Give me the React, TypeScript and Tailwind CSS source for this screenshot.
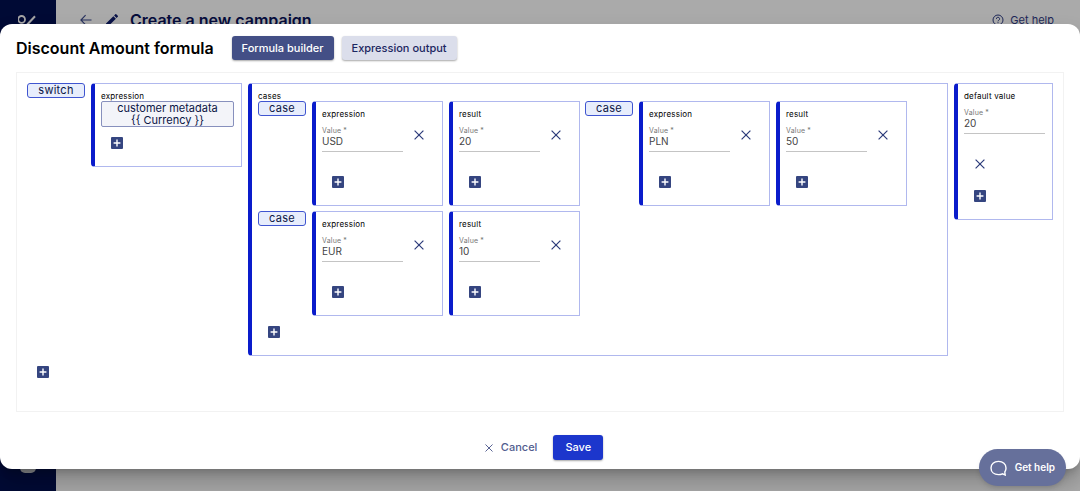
import React, { useId, useState } from "react";

type BoxProps = {
  label: string;
  className?: string;
  children: React.ReactNode;
};

const cases = [
  { expression: "USD", result: "20" },
  { expression: "PLN", result: "50" },
  { expression: "EUR", result: "10" },
];

const CloseIcon = ({ className }: { className: string }) => (
  <svg viewBox="0 0 10 10" className={className} aria-hidden="true">
    <path d="M0.6 0.6 9.4 9.4M9.4 0.6 0.6 9.4" stroke="currentColor" strokeWidth="1.2" />
  </svg>
);

const AddButton = () => (
  <button type="button" aria-label="Add" className="flex size-8 shrink-0 items-center justify-center">
    <svg viewBox="0 0 12 12" className="size-3" aria-hidden="true">
      <rect width="12" height="12" rx="1" fill="#354580" />
      <path d="M6 2.6v6.8M2.6 6h6.8" stroke="#fff" strokeWidth="1.4" />
    </svg>
  </button>
);

const Tag = ({ children, className = "" }: { children: React.ReactNode; className?: string }) => (
  <span
    className={`flex shrink-0 items-center justify-center rounded-[3px] border border-[#3f55d0] bg-[#e7edfc] text-[11px] leading-[13px] tracking-wide text-[#0b1545] ${className}`}
  >
    {children}
  </span>
);

// blue edged container for every argument of a function
const Box = ({ label, className = "", children }: BoxProps) => (
  <div
    className={`rounded-l border border-l-4 border-[#b0b8ee] border-l-[#0a1ccb] py-[7px] pr-[7px] pl-1.5 ${className}`}
  >
    <div className="text-[8px] leading-[10px] tracking-wide text-black">{label}</div>
    {children}
  </div>
);

const ValueField = ({ value, stacked = false }: { value: string; stacked?: boolean }) => {
  const id = useId();
  const [text, setText] = useState(value);

  return (
    <div className={stacked ? "flex flex-col" : "flex"}>
      <div className="w-[81px] pt-2 pb-3.5">
        <label htmlFor={id} className="block text-[7px] leading-[7px] tracking-wide text-[#777]">
          Value *
        </label>
        <input
          id={id}
          value={text}
          onChange={(e) => setText(e.target.value)}
          className="block h-[18px] w-full border-b border-[#c4c4c4] pb-1 text-[10px] leading-[14px] text-[#444] outline-none"
        />
      </div>
      <button
        type="button"
        aria-label="Remove value"
        className="flex size-8 shrink-0 items-center justify-center text-[#2c3b7a]"
      >
        <CloseIcon className="size-2.5" />
      </button>
    </div>
  );
};

const Backdrop = () => (
  <div className="flex min-h-screen bg-[#aaaaaa]">
    <div className="flex w-14 flex-col items-center justify-between bg-[#000a35] pt-3.5 pb-[18px]">
      <svg viewBox="0 0 20 14" className="h-3.5 w-5" fill="none" stroke="#a5a5a5" strokeWidth="1.8">
        <circle cx="3.6" cy="5.4" r="3.4" />
        <path d="M17 2.2 7.400 12.500" strokeWidth="2" />
      </svg>
      <div className="size-4 rounded-[5px] bg-[#8d8f91]" />
    </div>
    <div className="flex flex-1 items-start justify-between pt-[11px] pr-[26px] pl-6">
      <div className="flex items-center">
        <svg viewBox="0 0 12 12" className="size-3" fill="none" stroke="#27315e" strokeWidth="1.1">
          <path d="M11.5 6H1M5.6 1.2.9 6l4.7 4.8" />
        </svg>
        <svg viewBox="0 0 24 24" className="ml-3 size-4" fill="#0a1348">
          <path d="M3 17.25V21h3.75L17.81 9.94l-3.75-3.75zM20.71 7.04a1 1 0 0 0 0-1.41l-2.34-2.34a1 1 0 0 0-1.41 0l-1.83 1.83 3.75 3.75z" />
        </svg>
        <h2 className="ml-2.5 text-base leading-[18px] font-semibold text-[#060d3c]">
          Create a new campaign
        </h2>
      </div>
      <a href="#help" className="flex items-center gap-1.5 text-[11px] leading-[18px] text-[#1e2858]">
        <svg viewBox="0 0 12 12" className="size-3" fill="none" stroke="currentColor">
          <circle cx="6" cy="6" r="5" />
          <path d="M4.4 4.9a1.6 1.6 0 1 1 2.3 1.4c-.5.3-.7.5-.7 1M6 8.2v1" />
        </svg>
        Get help
      </a>
    </div>
  </div>
);

const App: React.FC = () => {
  return (
    <main className="relative min-h-screen overflow-hidden font-['Inter',sans-serif]">
      <Backdrop />

      <section
        role="dialog"
        aria-label="Discount Amount formula"
        className="absolute inset-x-0 top-6 rounded-xl bg-white px-4 pt-3 pb-[9px] shadow-[0_6px_8px_-3px_rgba(0,0,0,0.2),0_14px_22px_2px_rgba(0,0,0,0.2)]"
      >
        <div className="flex items-center gap-2">
          <h1 className="mr-2.5 text-base leading-6 font-semibold text-black">
            Discount Amount formula
          </h1>
          <button
            type="button"
            className="h-6 rounded-[3px] bg-[#434f86] px-2.5 text-[11px] font-medium text-white shadow-[0_1px_2px_rgba(0,0,0,0.35)]"
          >
            Formula builder
          </button>
          <button
            type="button"
            className="h-6 rounded-[3px] bg-[#dbdeeb] px-2.5 text-[11px] font-medium text-[#1c2761] shadow-[0_1px_2px_rgba(0,0,0,0.35)]"
          >
            Expression output
          </button>
        </div>

        {/* formula canvas */}
        <div className="mt-3 border border-[#f2f2f2] p-2.5 pb-[23px]">
          <div className="flex items-start gap-1.5">
            <Tag className="w-[58px]">switch</Tag>
            <Box label="expression" className="shrink-0">
              <div className="w-[133px] rounded-xs border border-[#8790bd] bg-[#f3f4f9] text-center text-[11px] leading-3 text-[#0b1545]">
                customer metadata
                <br />
                {"{{ Currency }}"}
              </div>
              <AddButton />
            </Box>
            <Box label="cases" className="min-w-0 flex-1">
              <div className="flex flex-wrap gap-[5px]">
                {cases.map((item) => (
                  <div key={item.expression} className="flex items-start gap-1.5">
                    <Tag className="w-12">case</Tag>
                    <Box label="expression">
                      <ValueField value={item.expression} />
                      <AddButton />
                    </Box>
                    <Box label="result">
                      <ValueField value={item.result} />
                      <AddButton />
                    </Box>
                  </div>
                ))}
              </div>
              <AddButton />
            </Box>
            <Box label="default value" className="shrink-0">
              <ValueField value="20" stacked />
              <AddButton />
            </Box>
          </div>
          <AddButton />
        </div>

        <div className="mt-[23px] flex items-center justify-center gap-4">
          <button
            type="button"
            className="flex h-[25px] items-center gap-2 pl-2 text-[11px] font-medium text-[#525d8f]"
          >
            <CloseIcon className="size-2" />
            Cancel
          </button>
          <button
            type="button"
            className="h-[25px] rounded-[3px] bg-[#1c36cc] px-3 text-[11px] font-medium text-white shadow-[0_1px_2px_rgba(0,0,0,0.35)]"
          >
            Save
          </button>
        </div>
      </section>

      {/* support chat */}
      <button
        type="button"
        className="absolute right-3.5 bottom-[5px] flex h-[37px] items-center gap-2 rounded-full bg-[#66709b] px-[11px] text-[10px] font-semibold text-white shadow-md"
      >
        <svg viewBox="0 0 17 16" className="h-4 w-[17px]" fill="none" stroke="#fff" strokeWidth="1.4">
          <path d="M15.2 15l-.4-3A6.800 6.800 0 0 0 16 8c0-3.900-3-6.600-7.500-6.600S1 4.100 1 8s3 6.600 7.500 6.600c1.500 0 2.800-.3 3.900-.8z" />
        </svg>
        Get help
      </button>
    </main>
  );
};

export default App;
